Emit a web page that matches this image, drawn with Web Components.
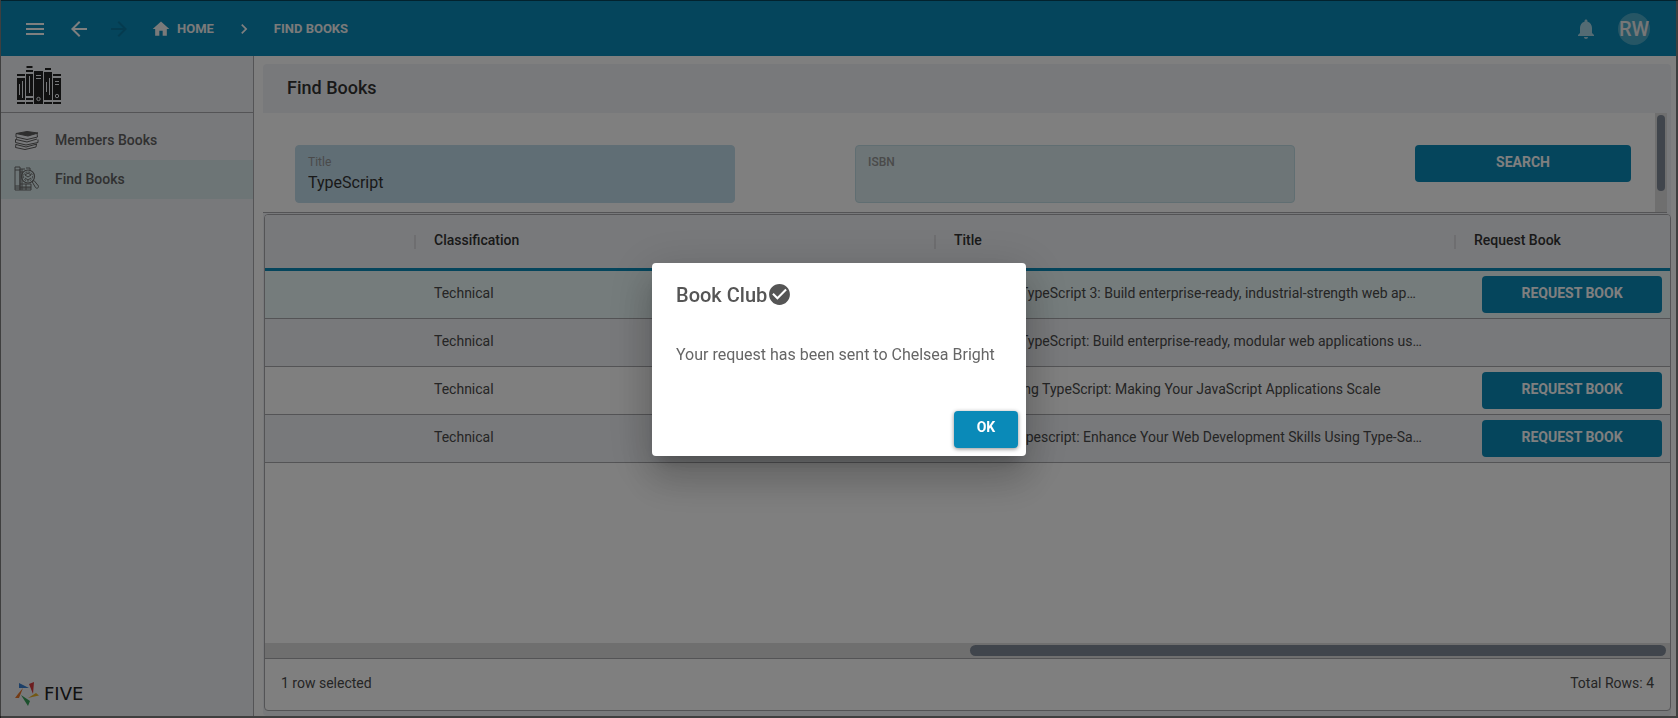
<!DOCTYPE html>
<html lang="en">
<head>
<meta charset="utf-8">
<title>Find Books</title>
<style>
    html, body {
        height: 100%;
        margin: 0;
    }
    body {
        font-family: Roboto, "Liberation Sans", sans-serif;
        font-size: 14px;
        line-height: 20px;
        color: #4a4a4a;
        background: #fff;
        --blue: #0a8ab8;
        --panel: #f1f3f7;
        --line: #a8a8ac;
        --track: #dedede;
        --thumb: #808a98;
    }
</style>
</head>
<body>
<book-app></book-app>
<message-dialog heading="Book Club">Your request has been sent to Chelsea Bright</message-dialog>

<script>
function attach(el, html) {
    const template = document.createElement("template");
    template.innerHTML = html;
    el.attachShadow({mode: "open"});
    el.shadowRoot.appendChild(template.content.cloneNode(true));
}

//================================ button =====================================
class ActionButton extends HTMLElement {
    constructor() {
        super();
        attach(this, `
        <style>
        :host { display: block; }
        button {
            display: block;
            box-sizing: border-box;
            width: 100%;
            height: 37px;
            padding: 0 16px 4px;
            border: 0;
            border-radius: 4px;
            background: var(--blue);
            color: #fff;
            font: bold 14px/20px Roboto, sans-serif;
            text-transform: uppercase;
            cursor: pointer;
        }
        :host([raised]) button {
            box-shadow: 0 1px 4px rgba(0,0,0,.45);
        }
        </style>
        <button type="button"><slot></slot></button>`);
    }
}
customElements.define("action-button", ActionButton);

//================================ top bar ====================================
class TopBar extends HTMLElement {
    constructor() {
        super();
        attach(this, `
        <style>
        :host {
            display: flex;
            align-items: center;
            box-sizing: border-box;
            height: 56px;
            padding: 1px 26px 0 22px;
            background: var(--blue);
            color: #fff;
        }
        button {
            display: block;
            padding: 0;
            border: 0;
            background: none;
            color: inherit;
            cursor: pointer;
        }
        svg { display: block; fill: currentColor; }
        .tools { display: flex; }
        .tools .back { margin-left: 20px; }
        .tools .next { margin-left: 16px; color: #0a779f; }
        nav {
            display: flex;
            align-items: center;
            flex: 1;
            margin-left: 20px;
            font-size: 13px;
            font-weight: bold;
        }
        a {
            display: flex;
            align-items: center;
            gap: 6px;
            color: #f4f4f4;
            text-decoration: none;
        }
        nav > svg { margin: 0 20px; }
        .bell { opacity: .65; }
        .avatar {
            display: flex;
            justify-content: center;
            width: 32px;
            margin-left: 20px;
            border-radius: 50%;
            background: #4daccb;
            font-size: 20px;
            font-weight: 500;
            line-height: 32px;
            color: #eee;
            white-space: nowrap;
        }
        </style>
        <div class="tools">
            <button aria-label="Menu"><svg width="24" height="24" viewBox="0 0 24 24"><path d="M3 18h18v-2H3v2zm0-5h18v-2H3v2zm0-7v2h18V6H3z"/></svg></button>
            <button class="back" aria-label="Back"><svg width="24" height="24" viewBox="0 0 24 24"><path d="M20 11H7.83l5.59-5.59L12 4l-8 8 8 8 1.41-1.41L7.83 13H20v-2z"/></svg></button>
            <button class="next" aria-label="Forward" disabled><svg width="24" height="24" viewBox="0 0 24 24"><path d="M12 4l-1.41 1.41L16.17 11H4v2h12.17l-5.58 5.59L12 20l8-8z"/></svg></button>
        </div>
        <nav aria-label="Breadcrumb">
            <a href="#"><svg width="20" height="20" viewBox="0 0 24 24"><path d="M10 20v-6h4v6h5v-8h3L12 3 2 12h3v8z"/></svg>HOME</a>
            <svg width="20" height="20" viewBox="0 0 24 24"><path d="M10 6L8.59 7.41 13.17 12l-4.58 4.59L10 18l6-6z"/></svg>
            <a href="#">FIND BOOKS</a>
        </nav>
        <button class="bell" aria-label="Notifications"><svg width="24" height="24" viewBox="0 0 24 24"><path d="M12 22c1.1 0 2-.9 2-2h-4c0 1.1.89 2 2 2zm6-6v-5c0-3.07-1.64-5.64-4.5-6.32V4c0-.83-.67-1.5-1.5-1.5s-1.5.67-1.5 1.5v.68C7.63 5.36 6 7.92 6 11v5l-2 2v1h16v-1l-2-2z"/></svg></button>
        <div class="avatar">RW</div>`);
    }
}
customElements.define("top-bar", TopBar);

//================================ sidebar ====================================
class NavItem extends HTMLElement {
    constructor() {
        super();
        attach(this, `
        <style>
        :host { display: block; }
        a {
            display: flex;
            align-items: center;
            gap: 16px;
            box-sizing: border-box;
            height: 39px;
            padding: 0 0 2px 13px;
            color: #626262;
            font-weight: 500;
            text-decoration: none;
        }
        :host([selected]) a { background: #daebed; }
        ::slotted(svg) { display: block; width: 25px; height: 25px; }
        </style>
        <a href="#"><slot name="icon"></slot><slot></slot></a>`);
    }
}
customElements.define("nav-item", NavItem);

class SideNav extends HTMLElement {
    constructor() {
        super();
        attach(this, `
        <style>
        :host {
            display: flex;
            flex-direction: column;
            border-right: 1px solid var(--line);
            background: var(--panel);
        }
        header {
            box-sizing: border-box;
            height: 57px;
            padding: 10px 16px;
            border-bottom: 1px solid var(--line);
        }
        header svg { display: block; }
        nav { flex: 1; padding-top: 8px; }
        footer {
            display: flex;
            align-items: center;
            gap: 5px;
            padding: 0 14px 10px;
            font: 18px/24px "DejaVu Sans", sans-serif;
            color: #222;
        }
        </style>
        <header>
            <svg width="44" height="38" viewBox="0 0 44 38">
                <g fill="#222">
                    <path d="M0 8h8v2H0zM0 12h8v22H0zM0 36h8v2H0z"/>
                    <path d="M9.500 0h6v2h-6zM9 4h7v2H9zM9 8h7v22H9zM9 32h7v2H9zM9 36h7v2H9z"/>
                    <path d="M17 5h9v33h-9z"/>
                    <path d="M28 2h6v2h-6zM27 6h8v28h-8zM27 36h8v2h-8z"/>
                    <path d="M36 8h8v2h-8zM36 12h8v22h-8zM36 36h8v2h-8z"/>
                </g>
                <g stroke="#f1f3f7" stroke-width="1" fill="none">
                    <path d="M2.500 18v11M5.500 15v17M12.500 10v17M29.500 16v10M32.500 12v17M19 9.500h5M19 12.500h5M38 15.500h4M38 18.500h4"/>
                    <circle cx="21.500" cy="33" r="1.700"/><circle cx="40" cy="30" r="1.700"/>
                </g>
            </svg>
        </header>
        <nav>
            <nav-item>
                <svg slot="icon" viewBox="0 0 25 25" fill="none" stroke="#5c5c5c" stroke-width="1" stroke-linejoin="round">
                    <path fill="#5c5c5c" d="M2 6.500L13 4.500l11 1.500-10 3z"/>
                    <path d="M2 6.500v3.500l11 2.500 10.500-2.500-.5-3.500M3 11.500l-1.500 1v3L12 18l12-2.500v-3M2 12.500l11 2.500 10-3M2 17l-.5 3.500L11 22.500l11-2.500.5-3M2 17.500L12 20l11-3"/>
                </svg>
                Members Books
            </nav-item>
            <nav-item selected>
                <svg slot="icon" viewBox="0 0 25 25" fill="none" stroke="#6c6c6c" stroke-width="1">
                    <path d="M1 1h5v23H1zM6 3v21h11v-6M12 18v6M1 4h5M1 20h5M6 6h3M6 18h11M6 21h11M8 3v21M6 3h5M12 2h4v3M1 22h16"/>
                    <circle cx="14" cy="10.500" r="6.500" stroke-width="1.200"/>
                    <circle cx="14" cy="10.500" r="4.500" stroke-dasharray="2 1"/>
                    <path d="M11 9l3-2 3 2-3 2zM11 12l3 2 3-2"/>
                    <path d="M18 15.500l2-1 4.500 5.500c.5 2-2 3-3 1.500z"/>
                </svg>
                Find Books
            </nav-item>
        </nav>
        <footer>
            <svg width="24" height="24" viewBox="0 0 24 24">
                <path fill="#397fd0" d="M4 1l10 5H4z"/>
                <path fill="#d83a3f" d="M14 2l5-2-1 12z"/>
                <path fill="#e7b129" d="M13 16l8-5 3 2.500z"/>
                <path fill="#39a05a" d="M6 13l9 6-2 5z"/>
                <path fill="#e9772b" d="M0 16l3-4 5-6-4 10z"/>
            </svg>
            <span>FIVE</span>
        </footer>`);
    }
}
customElements.define("side-nav", SideNav);

//================================ search form ================================
class TextField extends HTMLElement {
    constructor() {
        super();
        attach(this, `
        <style>
        :host { display: block; }
        .box {
            box-sizing: border-box;
            height: 58px;
            padding: 7px 12px;
            border: 1px solid #c0dce4;
            border-radius: 4px;
            background: #daebef;
        }
        :host([filled]) .box { background: #c0dcea; border-color: #c0dcea; }
        label {
            display: block;
            font-size: 12px;
            font-weight: 500;
            line-height: 18px;
            color: #959595;
        }
        :host([filled]) label { font-weight: 400; }
        input {
            display: block;
            width: 100%;
            height: 24px;
            padding: 0;
            border: 0;
            outline: 0;
            background: none;
            color: #333;
            font: 16px/24px Roboto, sans-serif;
        }
        </style>
        <div class="box">
            <label for="inp"></label>
            <input id="inp" type="text">
        </div>`);
        this.shadowRoot.querySelector("label").textContent = this.getAttribute("label");
        this.shadowRoot.querySelector("#inp").value = this.getAttribute("value") || "";
    }
}
customElements.define("text-field", TextField);

class SearchForm extends HTMLElement {
    constructor() {
        super();
        attach(this, `
        <style>
        :host {
            display: flex;
            box-sizing: border-box;
            height: 100px;
            margin-right: 4px;
            border-bottom: 1px solid var(--line);
            background: #fff;
        }
        form {
            flex: 1;
            display: grid;
            grid-template-columns: 440fr 440fr 216fr;
            gap: 120px;
            align-items: start;
            padding: 32px 24px 0 32px;
        }
        .bar { width: 8px; padding: 2px; background: var(--track); }
        .thumb { height: 76px; border-radius: 4px; background: var(--thumb); }
        </style>
        <form>
            <text-field label="Title" value="TypeScript" filled></text-field>
            <text-field label="ISBN"></text-field>
            <action-button>Search</action-button>
        </form>
        <div class="bar"><div class="thumb"></div></div>`);
    }
}
customElements.define("search-form", SearchForm);

//================================ table ======================================
// titles come already shortened for the grid
const books = [
    {cls: "Technical", title: "Mastering TypeScript 3: Build enterprise-ready, industrial-strength web ap…", request: true},
    {cls: "Technical", title: "Mastering TypeScript: Build enterprise-ready, modular web applications us…", request: false},
    {cls: "Technical", title: "Programming TypeScript: Making Your JavaScript Applications Scale", request: true},
    {cls: "Technical", title: "Learning Typescript: Enhance Your Web Development Skills Using Type-Sa…", request: true}
];

class BookTable extends HTMLElement {
    constructor() {
        super();
        attach(this, `
        <style>
        :host {
            display: flex;
            flex-direction: column;
            flex: 1;
            min-height: 0;
            margin: 1px 0 5px 1px;
            border: 1px solid var(--line);
            border-radius: 4px;
            background: #fff;
            overflow: hidden;
        }
        .scroll { flex: 1; }
        table {
            width: 100%;
            table-layout: fixed;
            border-collapse: separate;
            border-spacing: 0;
        }
        col.cls, col.title { width: 520px; }
        col.req { width: 216px; }
        th {
            height: 53px;
            padding: 0;
            border-bottom: 3px solid var(--blue);
            background: var(--panel);
            color: #333;
            font-weight: 500;
            text-align: left;
        }
        th span {
            display: block;
            padding: 0 0 4px 18px;
            border-left: 2px solid #dcdde1;
            line-height: 10px;
        }
        td {
            box-sizing: border-box;
            height: 48px;
            padding: 0 20px 4px;
            border-bottom: 1px solid var(--line);
            white-space: nowrap;
            overflow: hidden;
            text-overflow: ellipsis;
        }
        td:last-child { padding: 0 8px 0 28px; }
        tr:nth-child(even) td { background: var(--panel); }
        tr.selected td { background: #ebf8f8; }
        .bar {
            padding: 2px 4px 2px 0;
            border-bottom: 1px solid var(--line);
            background: var(--track);
        }
        .thumb {
            width: 696px;
            height: 11px;
            margin-left: auto;
            border-radius: 6px;
            background: var(--thumb);
        }
        footer {
            display: flex;
            justify-content: space-between;
            padding: 14px 16px 17px;
        }
        </style>
        <div class="scroll">
            <table>
                <colgroup><col><col class="cls"><col class="title"><col class="req"></colgroup>
                <thead>
                    <tr><th></th><th><span>Classification</span></th><th><span>Title</span></th><th><span>Request Book</span></th></tr>
                </thead>
                <tbody></tbody>
            </table>
        </div>
        <div class="bar"><div class="thumb"></div></div>
        <footer><span>1 row selected</span><span>Total Rows: 4</span></footer>`);
        this.shadowRoot.querySelector("tbody").innerHTML = books.map((b, i) => `
            <tr class="${i === 0 ? "selected" : ""}">
                <td></td>
                <td>${b.cls}</td>
                <td>${b.title}</td>
                <td>${b.request ? "<action-button>Request Book</action-button>" : ""}</td>
            </tr>`).join("");
    }
}
customElements.define("book-table", BookTable);

//================================ page =======================================
class BookApp extends HTMLElement {
    constructor() {
        super();
        attach(this, `
        <style>
        :host {
            display: flex;
            flex-direction: column;
            box-sizing: border-box;
            height: 100vh;
            padding: 0 2px 2px 1px;
        }
        .body { flex: 1; display: flex; min-height: 0; }
        side-nav { width: 252px; }
        main {
            flex: 1;
            display: flex;
            flex-direction: column;
            min-width: 0;
            margin: 8px 5px 0 9px;
            border-radius: 4px;
            background: var(--panel);
        }
        h1 {
            margin: 0;
            padding: 12px 24px;
            color: #333;
            font-size: 18px;
            font-weight: 500;
            line-height: 24px;
        }
        search-form { margin-top: 1px; }
        </style>
        <top-bar></top-bar>
        <div class="body">
            <side-nav></side-nav>
            <main>
                <h1>Find Books</h1>
                <search-form></search-form>
                <book-table></book-table>
            </main>
        </div>`);
    }
}
customElements.define("book-app", BookApp);

//================================ dialog =====================================
class MessageDialog extends HTMLElement {
    constructor() {
        super();
        attach(this, `
        <style>
        :host {
            position: fixed;
            inset: 0;
            display: flex;
            align-items: center;
            justify-content: center;
            box-shadow: inset 1px 1px rgba(0,0,0,.5), inset -2px -2px rgba(0,0,0,.5);
            background: rgba(0,0,0,.5);
        }
        section {
            min-width: 374px;
            border-radius: 4px;
            background: #fff;
            color: #666;
            box-shadow: 0 11px 15px -7px rgba(0,0,0,.2), 0 24px 38px 3px rgba(0,0,0,.14), 0 9px 46px 8px rgba(0,0,0,.12);
        }
        h2 {
            display: flex;
            align-items: center;
            margin: 0;
            padding: 16px 24px;
            color: #555;
            font-size: 20px;
            font-weight: 500;
            line-height: 32px;
        }
        svg { display: block; fill: #555; }
        p {
            margin: 0;
            padding: 16px 24px 44px;
            font-size: 16px;
            line-height: 24px;
        }
        .actions {
            display: flex;
            justify-content: flex-end;
            padding: 0 8px 8px;
        }
        action-button { width: 64px; }
        </style>
        <section role="dialog" aria-labelledby="head">
            <h2><span id="head"></span><svg width="25" height="25" viewBox="0 0 24 24"><path d="M12 2C6.480 2 2 6.480 2 12s4.480 10 10 10 10-4.480 10-10S17.520 2 12 2zm-2 15l-5-5 1.410-1.410L10 14.170l7.590-7.590L19 8l-9 9z"/></svg></h2>
            <p><slot></slot></p>
            <div class="actions"><action-button raised>OK</action-button></div>
        </section>`);
        this.shadowRoot.querySelector("#head").textContent = this.getAttribute("heading");
    }
}
customElements.define("message-dialog", MessageDialog);
</script>
</body>
</html>
